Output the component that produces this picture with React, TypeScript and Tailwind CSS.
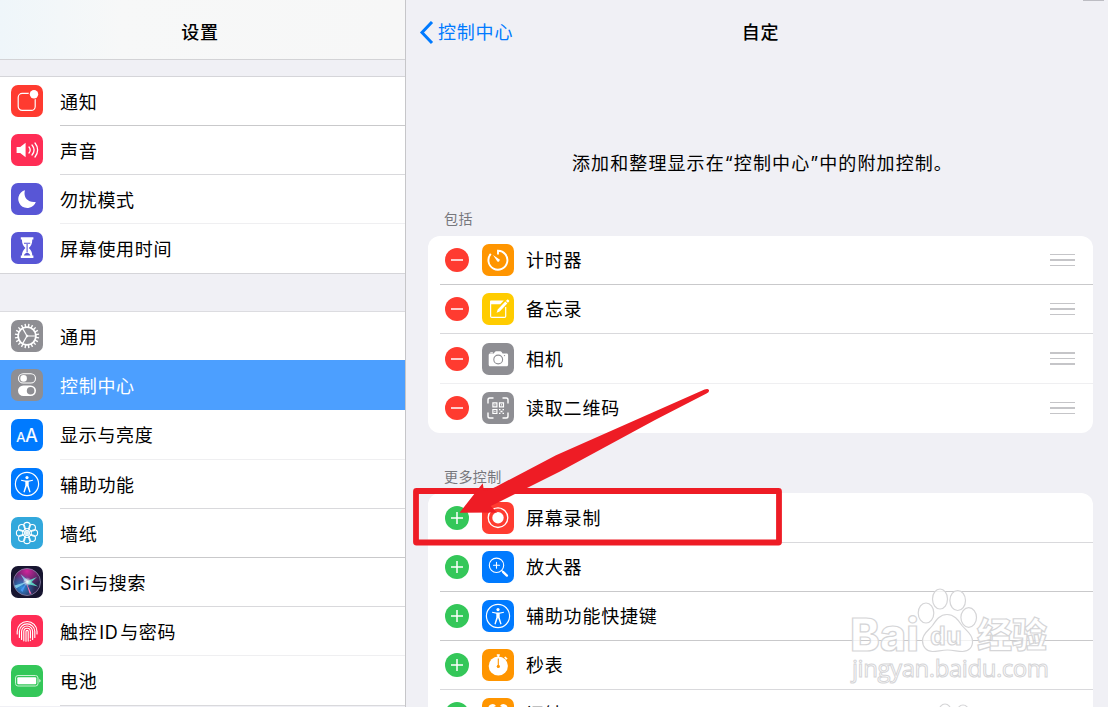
import type { ReactNode } from 'react';
import clsx from 'clsx';

type SettingRow = {
  label: string;
  icon: ReactNode;
  bg: string;
  height?: string;
  line?: string;
  active?: boolean;
};

const LINE_DARK = 'border-[#c9c9cb]';
const LINE_MID = 'border-[#d9d9dc]';
const LINE_LIGHT = 'border-[#efeff1]';

const ring = (count: number, offset = 0) =>
  Array.from({ length: count }, (_, i) => ((i * 360) / count + offset) * (Math.PI / 180));

function Tile({ bg, children }: { bg: string; children: ReactNode }) {
  return (
    <svg viewBox="0 0 32 32" className={clsx('h-8 w-8 shrink-0 rounded-[7px]', bg)} fill="none">
      {children}
    </svg>
  );
}

const Bell = () => (
  <>
    <rect x="7.2" y="8.4" width="17" height="17" rx="4" stroke="#fff" strokeWidth="1.2" />
    <circle cx="23" cy="9" r="5.4" fill="#ff3b30" />
    <circle cx="23" cy="9.2" r="4.2" fill="#fff" />
  </>
);

const Sound = () => (
  <>
    <path d="M5.6 12.9h3.6l5.4-4.2v14.6l-5.4-4.2H5.6z" fill="#fff" />
    <path
      d="M18 13c1.4 1.8 1.4 4.3 0 6M21 11c2.5 3 2.5 7 0 10M24 9c3.5 4.2 3.5 9.8 0 14"
      stroke="#fff"
      strokeWidth="1.3"
      strokeLinecap="round"
    />
  </>
);

const Moon = () => (
  <path d="M14 7.3C12.2 12.4 15.2 20 24.8 18.9A9 9 0 1 1 14 7.3z" fill="#fff" />
);

const Hourglass = () => (
  <>
    <path
      d="M9.8 5.2h12.6v2.4h-1.1c0 4.4-1.5 6.5-3.5 8.4 2 1.9 3.5 4 3.5 7.6h1.1V26H9.8v-2.4h1.1c0-3.6 1.5-5.7 3.5-7.6-2-1.9-3.5-4-3.5-8.4H9.8z"
      fill="#fff"
    />
    <path d="M13 11.2h6.2M16.1 12v8" stroke="#5856d6" strokeWidth="1.1" />
    <path d="M12.9 23.4c.4-1.7 1.6-2.3 3.2-3 1.6.7 2.8 1.3 3.2 3z" fill="#5856d6" />
  </>
);

const Gear = () => (
  <g stroke="#fff">
    <circle cx="16" cy="16" r="8.9" strokeWidth="1.8" />
    {ring(20, 9).map((a) => (
      <line
        key={a}
        x1={16 + Math.cos(a) * 9}
        y1={16 + Math.sin(a) * 9}
        x2={16 + Math.cos(a) * 12.2}
        y2={16 + Math.sin(a) * 12.2}
        strokeWidth="1.4"
      />
    ))}
    {ring(3).map((a) => (
      <line key={a} x1="16" y1="16" x2={16 + Math.cos(a) * 8.5} y2={16 + Math.sin(a) * 8.5} strokeWidth="1.2" />
    ))}
    <circle cx="16" cy="16" r="1" fill="#fff" strokeWidth="0.5" />
  </g>
);

const Toggles = () => (
  <>
    <rect x="7.5" y="4.8" width="17" height="9.2" rx="4.6" stroke="#fff" strokeWidth="1.1" />
    <circle cx="12.6" cy="9.4" r="3.3" fill="#fff" />
    <rect x="7" y="16.4" width="18" height="10.6" rx="5.3" fill="#fff" />
    <circle cx="19.6" cy="21.7" r="3.8" fill="#8e8e93" />
  </>
);

const Letters = () => (
  <g fill="#fff" stroke="#fff" strokeWidth="0.2" fontFamily="Inter, sans-serif">
    <text x="5.2" y="22.6" fontSize="13.4" letterSpacing="0">A</text>
    <text x="14.2" y="22.6" fontSize="18" letterSpacing="0">A</text>
  </g>
);

const Person = () => (
  <>
    <circle cx="16" cy="16" r="11.6" stroke="#fff" strokeWidth="1.2" />
    <circle cx="16" cy="9.6" r="1.6" fill="#fff" />
    <path
      d="M10.2 11.7l4 .7h3.6l4-.7.2 1-4.3 1.1v3.6l1.9 6.7-1.2.4-2.3-6.4h-.2l-2.3 6.4-1.2-.4 1.9-6.7v-3.6l-4.3-1.1z"
      fill="#fff"
    />
  </>
);

const Flower = () => (
  <g stroke="#fff" strokeWidth="1.1">
    {ring(8).map((a) => (
      <circle key={a} cx={16 + Math.cos(a) * 7.4} cy={16 + Math.sin(a) * 7.4} r="3.2" />
    ))}
    {ring(8, 22.5).map((a) => (
      <line key={a} x1="16" y1="16" x2={16 + Math.cos(a) * 5.4} y2={16 + Math.sin(a) * 5.4} strokeWidth="0.8" />
    ))}
    <circle cx="16" cy="16" r="2.4" />
  </g>
);

const Siri = () => (
  <>
    <defs>
      <radialGradient id="siri-pink" cx="0.5" cy="0.1" r="0.6">
        <stop offset="0" stopColor="#d0259c" />
        <stop offset="1" stopColor="#d0259c" stopOpacity="0" />
      </radialGradient>
      <radialGradient id="siri-blue" cx="0.3" cy="0.7" r="0.5">
        <stop offset="0" stopColor="#2f8fdc" />
        <stop offset="1" stopColor="#2f8fdc" stopOpacity="0" />
      </radialGradient>
      <radialGradient id="siri-core">
        <stop offset="0" stopColor="#fff" />
        <stop offset="1" stopColor="#fff" stopOpacity="0" />
      </radialGradient>
    </defs>
    <circle cx="16" cy="16" r="13.5" fill="#2b2550" />
    <circle cx="16" cy="16" r="13.5" fill="url(#siri-pink)" />
    <circle cx="16" cy="16" r="13.5" fill="url(#siri-blue)" />
    <circle cx="16" cy="16" r="13.5" stroke="#8d84a8" strokeWidth="0.8" />
    <path d="M17 15.5L5 22.5l-1.5-3zM17 14.5L9.5 8l4 7z" fill="#8fdcf2" opacity="0.8" />
    <path d="M15 15.5L26 11l-5.5 5 6.5 4.5-11-2.5z" fill="#5fe6cf" opacity="0.85" />
    <path d="M15 16l5.5 12-2-.5z" fill="#ff6fb4" />
    <path d="M15.5 17l-4 9-2-2z" fill="#4f9dff" opacity="0.8" />
    <circle cx="16.2" cy="15.7" r="4.5" fill="url(#siri-core)" />
  </>
);

const Finger = () => (
  <g stroke="#fff" strokeWidth="1.15" strokeLinecap="round">
    <path d="M6.2 19v-2.6a9.9 9.9 0 0 1 19.8 0V19" />
    <path d="M8.4 22.5v-6a7.7 7.7 0 0 1 15.4 0v6" />
    <path d="M10.6 24.5v-8a5.5 5.5 0 0 1 11 0v8" />
    <path d="M12.8 25.8v-9.3a3.3 3.3 0 0 1 6.6 0V23M19.4 25v.6" />
    <path d="M15 26.2V16.5a1.1 1.1 0 0 1 2.2 0v9.6" />
  </g>
);

const Battery = () => (
  <>
    <rect x="4.5" y="10.5" width="22.5" height="10.5" rx="2.5" stroke="#c9f2d2" strokeWidth="1" />
    <rect x="6.3" y="12.2" width="18.9" height="7.1" rx="1" fill="#fff" />
    <path d="M28.3 14c1.8.6 1.8 2.9 0 3.5z" fill="#d9f6df" />
  </>
);

const Timer = () => (
  <>
    <path d="M16 10.5V6.7a9.5 9.5 0 1 1-7.2 3.2" stroke="#fff" strokeWidth="1.9" />
    <path d="M11 11l6.2 4.2a1.4 1.4 0 0 1-2 2z" fill="#fff" />
  </>
);

const Note = () => (
  <>
    <path d="M23.7 14v9.2a1.2 1.2 0 0 1-1.2 1.2H9.8a1.2 1.2 0 0 1-1.2-1.2V9" stroke="#fff" strokeWidth="1.2" />
    <path d="M8 11.2V8.7c0-.8.5-1.2 1.2-1.2h12.6L18.3 11.2z" fill="#fff" />
    <path d="M14.6 19.8l1.1-3.2 7.6-8 2 1.9-7.6 8zM24 7.9l1.2-1.3c.7-.7 2.6 1.1 1.9 1.9l-1.2 1.3z" fill="#fff" />
  </>
);

const Camera = () => (
  <>
    <path
      d="M8.2 10.6h3.6l1.2-1.8c.3-.4.7-.6 1.1-.6h4.2c.4 0 .8.2 1.1.6l1.2 1.8h4c.9 0 1.5.6 1.5 1.5v9.7c0 .9-.6 1.5-1.5 1.5H8.2c-.9 0-1.5-.6-1.5-1.5v-9.7c0-.9.6-1.5 1.5-1.5z"
      fill="#fff"
    />
    <rect x="8.3" y="9.3" width="2.6" height="1" fill="#fff" />
    <circle cx="16.2" cy="16.5" r="4.4" stroke="#8e8e93" strokeWidth="1.1" />
    <circle cx="22.5" cy="12.6" r="0.7" fill="#8e8e93" />
  </>
);

const QrCode = () => (
  <g stroke="#fff">
    <path
      d="M6 11.5V7.8A1.8 1.8 0 0 1 7.8 6h3.7M20.5 6h3.7A1.8 1.8 0 0 1 26 7.8v3.7M26 20.5v3.7a1.8 1.8 0 0 1-1.8 1.8h-3.7M11.5 26H7.8A1.8 1.8 0 0 1 6 24.2v-3.7"
      strokeWidth="1.4"
    />
    <path d="M10.9 10.9h4v4h-4zM17.5 10.9h4v4h-4zM10.9 17.5h4v4h-4z" strokeWidth="1.2" />
    <path
      d="M12.4 12.9h1M19 12.9h1M12.4 19.5h1M17 17.7h1.5M20.5 17.7H22M18.5 19.5h2M17 21.4h1.5M20.5 21.4H22"
      strokeWidth="1.3"
    />
  </g>
);

const Record = () => (
  <>
    <circle cx="16" cy="15.7" r="9.8" stroke="#fff" strokeWidth="1.3" />
    <circle cx="16" cy="15.7" r="5.7" fill="#fff" />
  </>
);

const Magnifier = () => (
  <g stroke="#fff" strokeLinecap="round">
    <circle cx="14.5" cy="14.3" r="7.2" strokeWidth="1.1" />
    <path d="M11.5 14.3h6M14.5 11.3v6" strokeWidth="1.1" />
    <path d="M19.8 19.6l.8.8" strokeWidth="1.3" />
    <path d="M21 20.9l3.9 3.7" strokeWidth="2.4" />
  </g>
);

const Stopwatch = () => (
  <>
    <circle cx="16.3" cy="17" r="9.6" fill="#fff" />
    <path d="M14.8 6h3M16.3 6v3M22.7 8l2.3 2.2" stroke="#fff" strokeWidth="1.7" />
    <path d="M16.3 9.5v7" stroke="#ff9500" strokeWidth="1.1" />
    <circle cx="16.3" cy="17.4" r="1.6" fill="#ff9500" />
  </>
);

const Alarm = () => (
  <>
    <circle cx="16" cy="19" r="9" stroke="#fff" strokeWidth="2" />
    <path d="M6.5 11.5a4.2 4.2 0 0 1 7.5-3.5zM25.5 11.5A4.2 4.2 0 0 0 18 8z" fill="#fff" />
    <path d="M16 13v6h4" stroke="#fff" strokeWidth="1.5" />
  </>
);

const GENERAL: SettingRow[] = [
  { label: '通知', icon: <Bell />, bg: 'bg-[#ff3b30]', line: LINE_DARK },
  { label: '声音', icon: <Sound />, bg: 'bg-[#ff2d55]', line: LINE_MID },
  { label: '勿扰模式', icon: <Moon />, bg: 'bg-[#5856d6]', line: LINE_LIGHT },
  { label: '屏幕使用时间', icon: <Hourglass />, bg: 'bg-[#5856d6]', line: 'border-transparent' },
];

const DEVICE: SettingRow[] = [
  { label: '通用', icon: <Gear />, bg: 'bg-[#8e8e93]', height: 'h-12 pt-px', line: 'border-transparent' },
  { label: '控制中心', icon: <Toggles />, bg: 'bg-[#8e8e93]', height: 'h-[50px] pt-px', line: 'border-transparent', active: true },
  { label: '显示与亮度', icon: <Letters />, bg: 'bg-[#007aff]', height: 'h-[50px]', line: LINE_LIGHT },
  { label: '辅助功能', icon: <Person />, bg: 'bg-[#007aff]', line: LINE_MID },
  { label: '墙纸', icon: <Flower />, bg: 'bg-[#32a8dc]', line: LINE_DARK },
  { label: 'Siri与搜索', icon: <Siri />, bg: 'bg-[#171530]', line: LINE_MID },
  { label: '触控 ID 与密码', icon: <Finger />, bg: 'bg-[#ff2d55]', line: LINE_LIGHT },
  { label: '电池', icon: <Battery />, bg: 'bg-[#34c759]', height: 'h-[50px]', line: LINE_MID },
];

const INCLUDED: SettingRow[] = [
  { label: '计时器', icon: <Timer />, bg: 'bg-[#ff9500]', line: LINE_DARK },
  { label: '备忘录', icon: <Note />, bg: 'bg-[#ffcc00]', line: LINE_MID },
  { label: '相机', icon: <Camera />, bg: 'bg-[#8e8e93]', height: 'h-[50px]', line: LINE_LIGHT },
  { label: '读取二维码', icon: <QrCode />, bg: 'bg-[#8e8e93]', line: 'border-transparent' },
];

const MORE: SettingRow[] = [
  { label: '屏幕录制', icon: <Record />, bg: 'bg-[#ff3b30]', height: 'h-[50px]', line: LINE_MID },
  { label: '放大器', icon: <Magnifier />, bg: 'bg-[#007aff]', line: LINE_DARK },
  { label: '辅助功能快捷键', icon: <Person />, bg: 'bg-[#007aff]', line: LINE_DARK },
  { label: '秒表', icon: <Stopwatch />, bg: 'bg-[#ff9500]', line: LINE_MID },
  { label: '闹钟', icon: <Alarm />, bg: 'bg-[#ff9500]', line: LINE_MID },
];

function SidebarRow({ row }: { row: SettingRow }) {
  return (
    <div className={clsx('flex shrink-0 pl-[11px]', row.height ?? 'h-[49px]', row.active ? 'bg-[#4c9fff] text-white' : 'bg-white')}>
      <div className="flex w-[49px] shrink-0 items-center pb-px">
        <Tile bg={row.bg}>{row.icon}</Tile>
      </div>
      <div className={clsx('flex flex-1 items-center border-b pt-[3px] tracking-[0.7px] [word-spacing:-4px]', row.line)}>
        {row.label}
      </div>
    </div>
  );
}

function ControlRow({ row, kind }: { row: SettingRow; kind: 'remove' | 'add' }) {
  return (
    <div className={clsx('ml-3 flex shrink-0 items-center border-b pr-[18px] pl-[5px]', row.height ?? 'h-[49px]', row.line)}>
      <svg viewBox="0 0 24 24" className="h-6 w-6 shrink-0" stroke="#fff" strokeWidth="1.5">
        <circle cx="12" cy="12" r="12" fill={kind === 'add' ? '#34c759' : '#ff3b30'} stroke="none" />
        <path d="M6 12h12" />
        {kind === 'add' && <path d="M12 6v12" />}
      </svg>
      <div className="ml-[13px] flex">
        <Tile bg={row.bg}>{row.icon}</Tile>
      </div>
      <span className="ml-3 flex-1 pt-0.5">{row.label}</span>
      {kind === 'remove' && (
        <span className="flex w-[25px] flex-col gap-1">
          <i className="h-[1.5px] bg-[#c5c5c8]" />
          <i className="h-[1.5px] bg-[#c5c5c8]" />
          <i className="h-[1.5px] bg-[#c5c5c8]" />
        </span>
      )}
    </div>
  );
}

function Watermark() {
  return (
    <svg
      className="absolute top-[580px] left-[840px] tracking-normal"
      width="220"
      height="127"
      viewBox="840 580 220 127"
      fill="#fff"
      fillOpacity="0.75"
      stroke="#d5d5d7"
      strokeWidth="1.2"
    >
      <text x="850" y="651" fontSize="45" fontWeight="800" fontFamily="Inter, sans-serif" textLength="69" lengthAdjust="spacingAndGlyphs">
        Bai
      </text>
      <ellipse cx="926" cy="613" rx="7.8" ry="10" />
      <ellipse cx="940" cy="599" rx="7.5" ry="10" />
      <ellipse cx="957.7" cy="600.5" rx="7.8" ry="10" />
      <ellipse cx="968.7" cy="617.5" rx="7.8" ry="9.8" />
      <path d="M947 614.5c7 0 11 5 15 11 4 5 10 8 10.5 15 .5 7-4 11-10 11-5 0-9-1.5-15-1.5s-10 1.5-15 1.5c-6 0-10-4.5-10-11 0-7 6-10 10-15 4-6 7.5-11 14.5-11z" />
      <text x="930" y="645" fontSize="26" fontWeight="700" fontFamily="'Liberation Sans', sans-serif" textLength="32">
        du
      </text>
      <text x="977" y="648" fontSize="35" fontWeight="900" fontFamily="'Noto Sans CJK SC', sans-serif" textLength="70">
        经验
      </text>
      <text x="852" y="677" fontSize="24" fontFamily="'Open Sans', sans-serif" textLength="197" strokeWidth="1">
        jingyan.baidu.com
      </text>
      <ellipse cx="945" cy="711" rx="6" ry="7" />
      <ellipse cx="963" cy="712" rx="6" ry="7" />
    </svg>
  );
}

export default function App() {
  return (
    <div className="relative flex h-[707px] w-[1108px] overflow-hidden bg-[#f0f0f5] font-[Inter,'Noto_Sans_CJK_SC',sans-serif] text-[18px] leading-6 tracking-[0.8px] text-black">
      <aside className="flex w-[406px] shrink-0 flex-col overflow-hidden border-r border-[#c6c6c9]">
        <header className="flex h-[60px] shrink-0 items-center justify-center border-b border-[#d3d3d6] bg-linear-to-r from-[#eff6fa] via-[#f7f8f8] via-30% to-[#f7f7f7] pt-1.5 pr-[5px] font-medium">
          设置
        </header>
        <div className="mt-4 border-y border-[#d5d5d9]">
          {GENERAL.map((row) => (
            <SidebarRow key={row.label} row={row} />
          ))}
        </div>
        <div className="mt-[37px] border-t border-[#dcdce0]">
          {DEVICE.map((row) => (
            <SidebarRow key={row.label} row={row} />
          ))}
        </div>
      </aside>

      <main className="flex flex-1 flex-col overflow-hidden pr-[15px] pl-[22px]">
        <header className="-ml-[9px] grid h-[66px] shrink-0 grid-cols-[1fr_auto_1fr] items-center">
          <button className="flex items-center gap-1 text-left tracking-[0.8px] text-[#007aff]">
            <svg width="15" height="24" viewBox="0 0 15 24" fill="none" stroke="#007aff" strokeWidth="3">
              <path d="M13 1L3 11.5 13 22" />
            </svg>
            <span>控制中心</span>
          </button>
          <h1 className="pl-[9px] font-medium">自定</h1>
        </header>
        <p className="mt-[86px] h-6 shrink-0 pl-1 text-center tracking-[1.1px]">添加和整理显示在“控制中心”中的附加控制。</p>
        <h2 className="mt-8 ml-4 h-7 shrink-0 text-[14px] leading-[22px] tracking-[0.4px] text-[#77777c]">包括</h2>
        <section className="shrink-0 overflow-hidden rounded-xl bg-white">
          {INCLUDED.map((row) => (
            <ControlRow key={row.label} row={row} kind="remove" />
          ))}
        </section>
        <h2 className="mt-[33px] ml-4 h-[27px] shrink-0 text-[14px] leading-[22px] tracking-[0.4px] text-[#77777c]">更多控制</h2>
        <section className="shrink-0 overflow-hidden rounded-xl bg-white">
          {MORE.map((row) => (
            <ControlRow key={row.label} row={row} kind="add" />
          ))}
        </section>
      </main>

      <div className="absolute top-0 left-[1083px] h-px w-[21px] bg-[#bdbdc3]" />
      <Watermark />

      <svg className="absolute inset-0" width="1108" height="707" viewBox="0 0 1108 707" fill="none">
        <rect x="416" y="491" width="363" height="51.5" rx="0.5" stroke="#ee1c25" strokeWidth="5.8" strokeLinejoin="round" />
        <path
          d="M459.5 512.8L482.7 483.3L484 491Q490 490 496 486.7L556 455.3L704.5 389.6Q708 388 709 390.2Q709.5 392 706.5 393.5L655 420L560 471.5L500 501.5Q494 504.5 490.7 506L497 512.5Z"
          fill="#ee1c25"
        />
      </svg>
    </div>
  );
}
